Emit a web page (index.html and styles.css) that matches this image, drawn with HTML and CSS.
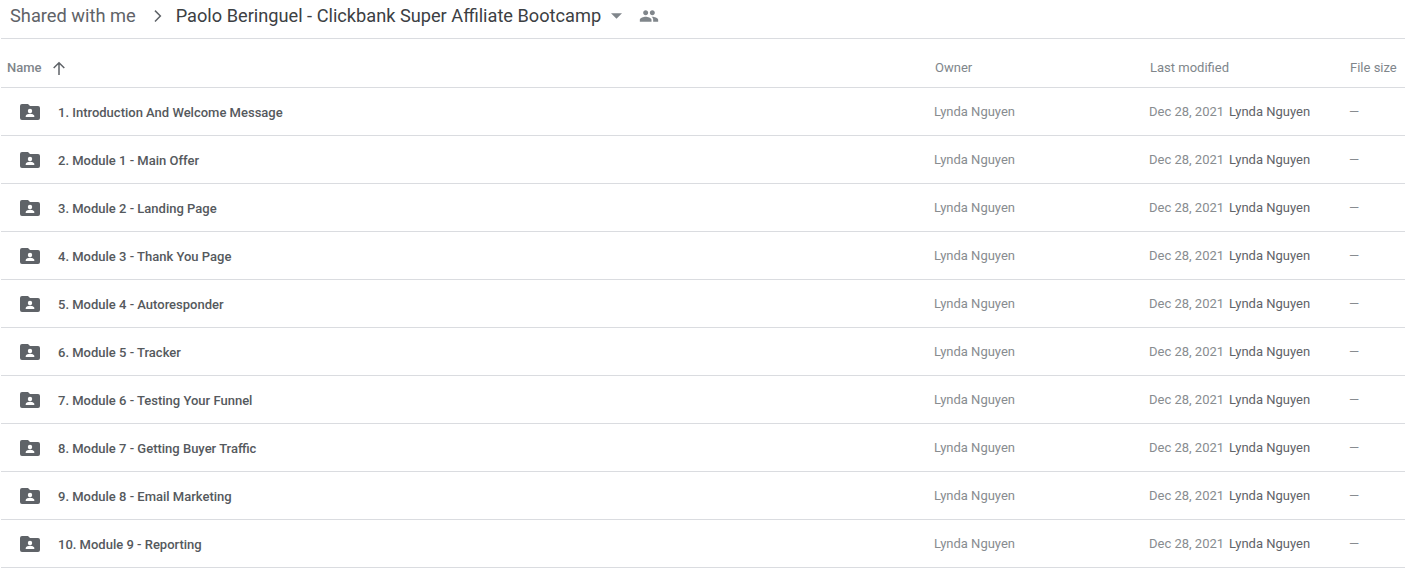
FILE: index.html
```
<!DOCTYPE html>
<html lang="en">
<head>
<meta charset="utf-8">
<title>Paolo Beringuel - Clickbank Super Affiliate Bootcamp</title>
<link rel="stylesheet" href="styles.css">
</head>
<body>
<svg class="defs" width="0" height="0" aria-hidden="true">
  <symbol id="shared-folder" viewBox="0 0 24 24"><path d="M4 5h6l2 2h8a2 2 0 0 1 2 2v10a2 2 0 0 1-2 2H4a2 2 0 0 1-2-2V7a2 2 0 0 1 2-2z" fill="#5f6368"/><circle cx="12" cy="12" r="2.2" fill="#fff"/><path d="M7.7 18v-1c0-1.5 2.9-2.3 4.3-2.3s4.300.8 4.300 2.300v1z" fill="#fff"/></symbol>
</svg>
<header class="crumbs">
  <span class="crumb-root">Shared with me</span>
  <svg class="chevron" viewBox="0 0 24 24"><path d="M8.6 5.500 10 4.100 17.900 12 10 19.900 8.600 18.500 15.100 12z" fill="#5f6368"/></svg>
  <span class="crumb-current">Paolo Beringuel - Clickbank Super Affiliate Bootcamp</span>
  <svg class="caret" viewBox="0 0 12 6"><path d="M0 0h12L6 6z" fill="#80868b"/></svg>
  <svg class="people" viewBox="0 0 24 24"><path d="M16 11c1.700 0 3-1.300 3-3s-1.300-3-3-3-3 1.300-3 3 1.300 3 3 3zm-8 0c1.700 0 3-1.300 3-3S9.700 5 8 5 5 6.300 5 8s1.300 3 3 3zm0 2c-2.300 0-7 1.200-7 3.500V19h14v-2.500C15 14.200 10.300 13 8 13zm8 0h-1c1.200.8 2 2 2 3.500V19h6v-2.500c0-2.300-4.700-3.500-7-3.500z" fill="#80868b"/></svg>
</header>
<main class="list">
  <div class="row head">
    <div class="head-name">Name<svg class="arrow" viewBox="0 0 16 16"><path d="M8 15V3M2.700 8 8 2.700 13.300 8" fill="none" stroke="#5f6368" stroke-width="1.500"/></svg></div>
    <div>Owner</div><div>Last modified</div><div>File size</div>
  </div>
  <div class="row"><div class="name"><svg class="folder"><use href="#shared-folder"/></svg>1. Introduction And Welcome Message</div><div>Lynda Nguyen</div><div>Dec 28, 2021<span class="by">Lynda Nguyen</span></div><div>—</div></div>
  <div class="row"><div class="name"><svg class="folder"><use href="#shared-folder"/></svg>2. Module 1 - Main Offer</div><div>Lynda Nguyen</div><div>Dec 28, 2021<span class="by">Lynda Nguyen</span></div><div>—</div></div>
  <div class="row"><div class="name"><svg class="folder"><use href="#shared-folder"/></svg>3. Module 2 - Landing Page</div><div>Lynda Nguyen</div><div>Dec 28, 2021<span class="by">Lynda Nguyen</span></div><div>—</div></div>
  <div class="row"><div class="name"><svg class="folder"><use href="#shared-folder"/></svg>4. Module 3 - Thank You Page</div><div>Lynda Nguyen</div><div>Dec 28, 2021<span class="by">Lynda Nguyen</span></div><div>—</div></div>
  <div class="row"><div class="name"><svg class="folder"><use href="#shared-folder"/></svg>5. Module 4 - Autoresponder</div><div>Lynda Nguyen</div><div>Dec 28, 2021<span class="by">Lynda Nguyen</span></div><div>—</div></div>
  <div class="row"><div class="name"><svg class="folder"><use href="#shared-folder"/></svg>6. Module 5 - Tracker</div><div>Lynda Nguyen</div><div>Dec 28, 2021<span class="by">Lynda Nguyen</span></div><div>—</div></div>
  <div class="row"><div class="name"><svg class="folder"><use href="#shared-folder"/></svg>7. Module 6 - Testing Your Funnel</div><div>Lynda Nguyen</div><div>Dec 28, 2021<span class="by">Lynda Nguyen</span></div><div>—</div></div>
  <div class="row"><div class="name"><svg class="folder"><use href="#shared-folder"/></svg>8. Module 7 - Getting Buyer Traffic</div><div>Lynda Nguyen</div><div>Dec 28, 2021<span class="by">Lynda Nguyen</span></div><div>—</div></div>
  <div class="row"><div class="name"><svg class="folder"><use href="#shared-folder"/></svg>9. Module 8 - Email Marketing</div><div>Lynda Nguyen</div><div>Dec 28, 2021<span class="by">Lynda Nguyen</span></div><div>—</div></div>
  <div class="row"><div class="name"><svg class="folder"><use href="#shared-folder"/></svg>10. Module 9 - Reporting</div><div>Lynda Nguyen</div><div>Dec 28, 2021<span class="by">Lynda Nguyen</span></div><div>—</div></div>
</main>
</body>
</html>
```
FILE: styles.css
```
* { box-sizing: border-box; }
html, body { margin: 0; padding: 0; background: #fff; overflow: hidden; }
body { font-family: Roboto, "Liberation Sans", sans-serif; color: #888c90; font-size: 13px; }
.defs { position: absolute; }
.crumbs {
  height: 39px; margin-left: 1px; padding: 0 0 7px 9px;
  display: flex; align-items: center;
  border-bottom: 1px solid #dadce0;
}
.crumb-root { font-size: 18.25px; color: #5f6368; }
.chevron { width: 18px; height: 18px; margin-left: 12px; }
.crumb-current { font-size: 18.2px; color: #3c4043; margin-left: 10px; }
.caret { width: 11px; height: 6px; margin-left: 10px; }
.people { width: 20px; height: 20px; margin-left: 17px; }
.list { margin-left: 1px; }
.row {
  height: 48px; display: grid; grid-template-columns: 933px 215px 200px 1fr;
  align-items: center; border-bottom: 1px solid #dadce0;
}
.row.head { height: 49px; padding-top: 9px; align-items: center; color: #80868b; }
.head > div { padding-left: 1px; }
.head-name { display: flex; align-items: center; padding-left: 6px !important; font-weight: 500; }
.arrow { width: 16px; height: 16px; margin-left: 9px; }
.name { display: flex; align-items: center; padding-left: 17px; color: #55595d; font-weight: 500; font-size: 13px; padding-top: 2px; }
.folder { width: 24px; height: 24px; margin-right: 16px; margin-top: -4px; }
.by { margin-left: 5px; color: #5f6368; }
```
